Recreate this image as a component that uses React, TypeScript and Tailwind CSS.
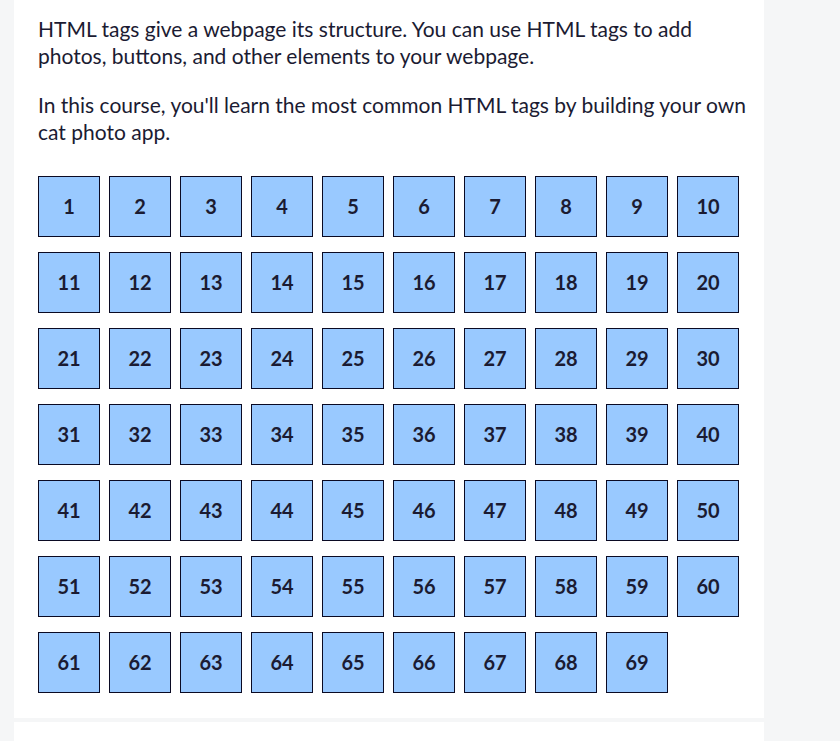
const steps = Array.from({ length: 69 }, (_, i) => i + 1);

export default function App() {
  return (
    <div className="min-h-screen bg-[#f5f6f7] pl-[14px] pr-[76px] font-['Lato',sans-serif] text-[#1b1b32]">
      <main className="bg-white pt-[15px] pb-[25px]">
        <div className="pr-4 pl-6 text-[21px] leading-[27px]">
          <p>
            HTML tags give a webpage its structure. You can use HTML tags to add photos, buttons, and other elements to your webpage.
          </p>
          <p className="mt-[22px]">
            In this course, you'll learn the most common HTML tags by building your own cat photo app.
          </p>
        </div>
        <nav aria-label="Course steps" className="mt-[31px] pr-[25px] pl-6">
          <ul className="grid grid-cols-10 gap-x-[9px] gap-y-[15px]">
            {steps.map((step) => (
              <li key={step}>
                <a
                  href={`#step-${step}`}
                  className="flex h-[61px] items-center justify-center border border-[#0a0a23] bg-[#99c9ff] pb-0.5 text-xl font-bold"
                >
                  {step}
                </a>
              </li>
            ))}
          </ul>
        </nav>
      </main>
      <section aria-label="Next course" className="mt-1 h-5 bg-white" />
    </div>
  );
}
